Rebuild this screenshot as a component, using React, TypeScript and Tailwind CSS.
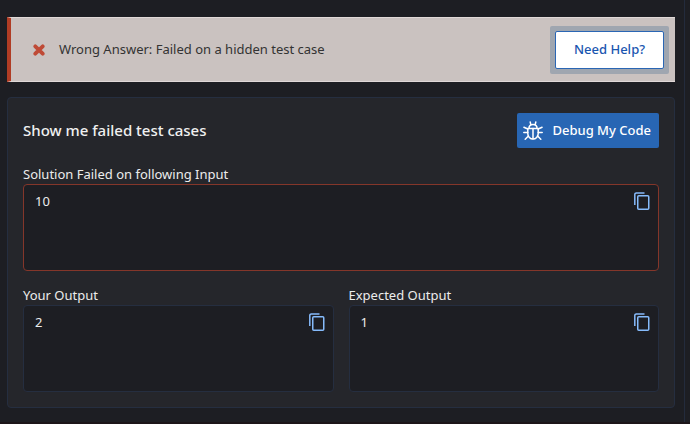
import React, { useId } from "react";

function CopyIcon() {
  return (
    <svg width="16" height="18" viewBox="0 0 16 18" fill="none" stroke="#86bbfb" strokeWidth="1.5" aria-hidden="true">
      <path d="M.8 13V2.500C.8 1.600 1.500 1 2.300 1H10.500" />
      <rect x="3.750" y="3.750" width="11" height="13.500" rx="1" />
    </svg>
  );
}

function BugIcon() {
  return (
    <svg
      width="20"
      height="20"
      viewBox="0 0 20 20"
      fill="none"
      stroke="currentColor"
      strokeWidth="1.5"
      strokeLinecap="round"
      strokeLinejoin="round"
      aria-hidden="true"
    >
      <path d="M4.800 7.500h10.400v5a5.200 5.600 0 0 1-10.400 0z" />
      <path d="M6 7.300C6 4.800 7.400 3.500 10 3.500S14 4.800 14 7.300" />
      <path d="M10 7.500v10.300" />
      <path d="M7.800 3.600 7.200 1M12.200 3.600 12.800 1" />
      <path d="M4.800 8 .9 6.200M15.200 8l3.900-1.800M4.800 11.600H.8M15.200 11.600h4M5.400 15 2.200 18.200M14.600 15l3.200 3.200" />
    </svg>
  );
}

function CrossIcon() {
  return (
    <svg width="12" height="12" viewBox="0 0 12 12" fill="none" stroke="#bf4a36" strokeWidth="3.800" strokeLinecap="round" aria-hidden="true">
      <path d="M2.300 2.300l7.400 7.400M9.700 2.300l-7.400 7.400" />
    </svg>
  );
}

type OutputBoxProps = { label: string; value: string; failed?: boolean };

function OutputBox({ label, value, failed = false }: OutputBoxProps) {
  const id = useId();
  return (
    <div className="min-w-0 flex-1">
      <label htmlFor={id} className="block text-[13px] leading-5 text-[#ececec]">
        {label}
      </label>
      <div
        className={
          failed
            ? "flex h-[87px] items-start rounded border border-[#84362a] bg-[#1d1e23]"
            : "flex h-[87px] items-start rounded border border-[#252e40] bg-[#1d1e23]"
        }
      >
        <textarea
          id={id}
          readOnly
          value={value}
          className="h-full min-w-0 flex-1 resize-none bg-transparent px-[11px] py-1.5 text-[13px] leading-5 text-[#ececec] outline-none"
        />
        <button type="button" aria-label={`Copy ${label}`} className="mt-[7px] mr-2">
          <CopyIcon />
        </button>
      </div>
    </div>
  );
}

export default function App() {
  return (
    <div className="min-h-screen border-b-2 border-[#1c1519] bg-[#1d1e23] pr-[5px] font-['Noto_Sans','Open_Sans',sans-serif]">
      <main className="flex min-h-[422px] flex-col gap-[15px] border-r border-[#232b3c] pt-[17px] pr-[9px] pl-[7px]">
        <section
          role="alert"
          className="flex h-[65px] items-center border-y border-l-4 border-y-[#e0d8d7] border-l-[#b03c24] bg-[#cac2c0] pr-1.5 pl-[22px]"
        >
          <CrossIcon />
          <p className="ml-3.5 flex-1 text-[13px] text-[#333333]">Wrong Answer: Failed on a hidden test case</p>
          <div className="rounded-xs bg-[#9fa6b0] p-[5px]">
            <button
              type="button"
              className="block h-[38px] w-[109px] rounded-xs border border-[#2a66b4] bg-white text-[13px] font-medium text-[#1a56b0]"
            >
              Need Help?
            </button>
          </div>
        </section>

        <section className="rounded border border-[#252e40] bg-[#25262b] p-[15px]">
          <div className="flex items-center justify-between">
            <h2 className="text-[15px] font-medium text-[#f0f0f0]">Show me failed test cases</h2>
            <button
              type="button"
              className="flex h-[35px] items-center gap-[9px] rounded-xs bg-[#2866b4] pr-2 pl-1.5 text-[13px] font-medium text-white"
            >
              <BugIcon />
              Debug My Code
            </button>
          </div>
          <div className="mt-4 flex">
            <OutputBox label="Solution Failed on following Input" value="10" failed />
          </div>
          <div className="mt-3.5 flex gap-[15px]">
            <OutputBox label="Your Output" value="2" />
            <OutputBox label="Expected Output" value="1" />
          </div>
        </section>
      </main>
    </div>
  );
}
